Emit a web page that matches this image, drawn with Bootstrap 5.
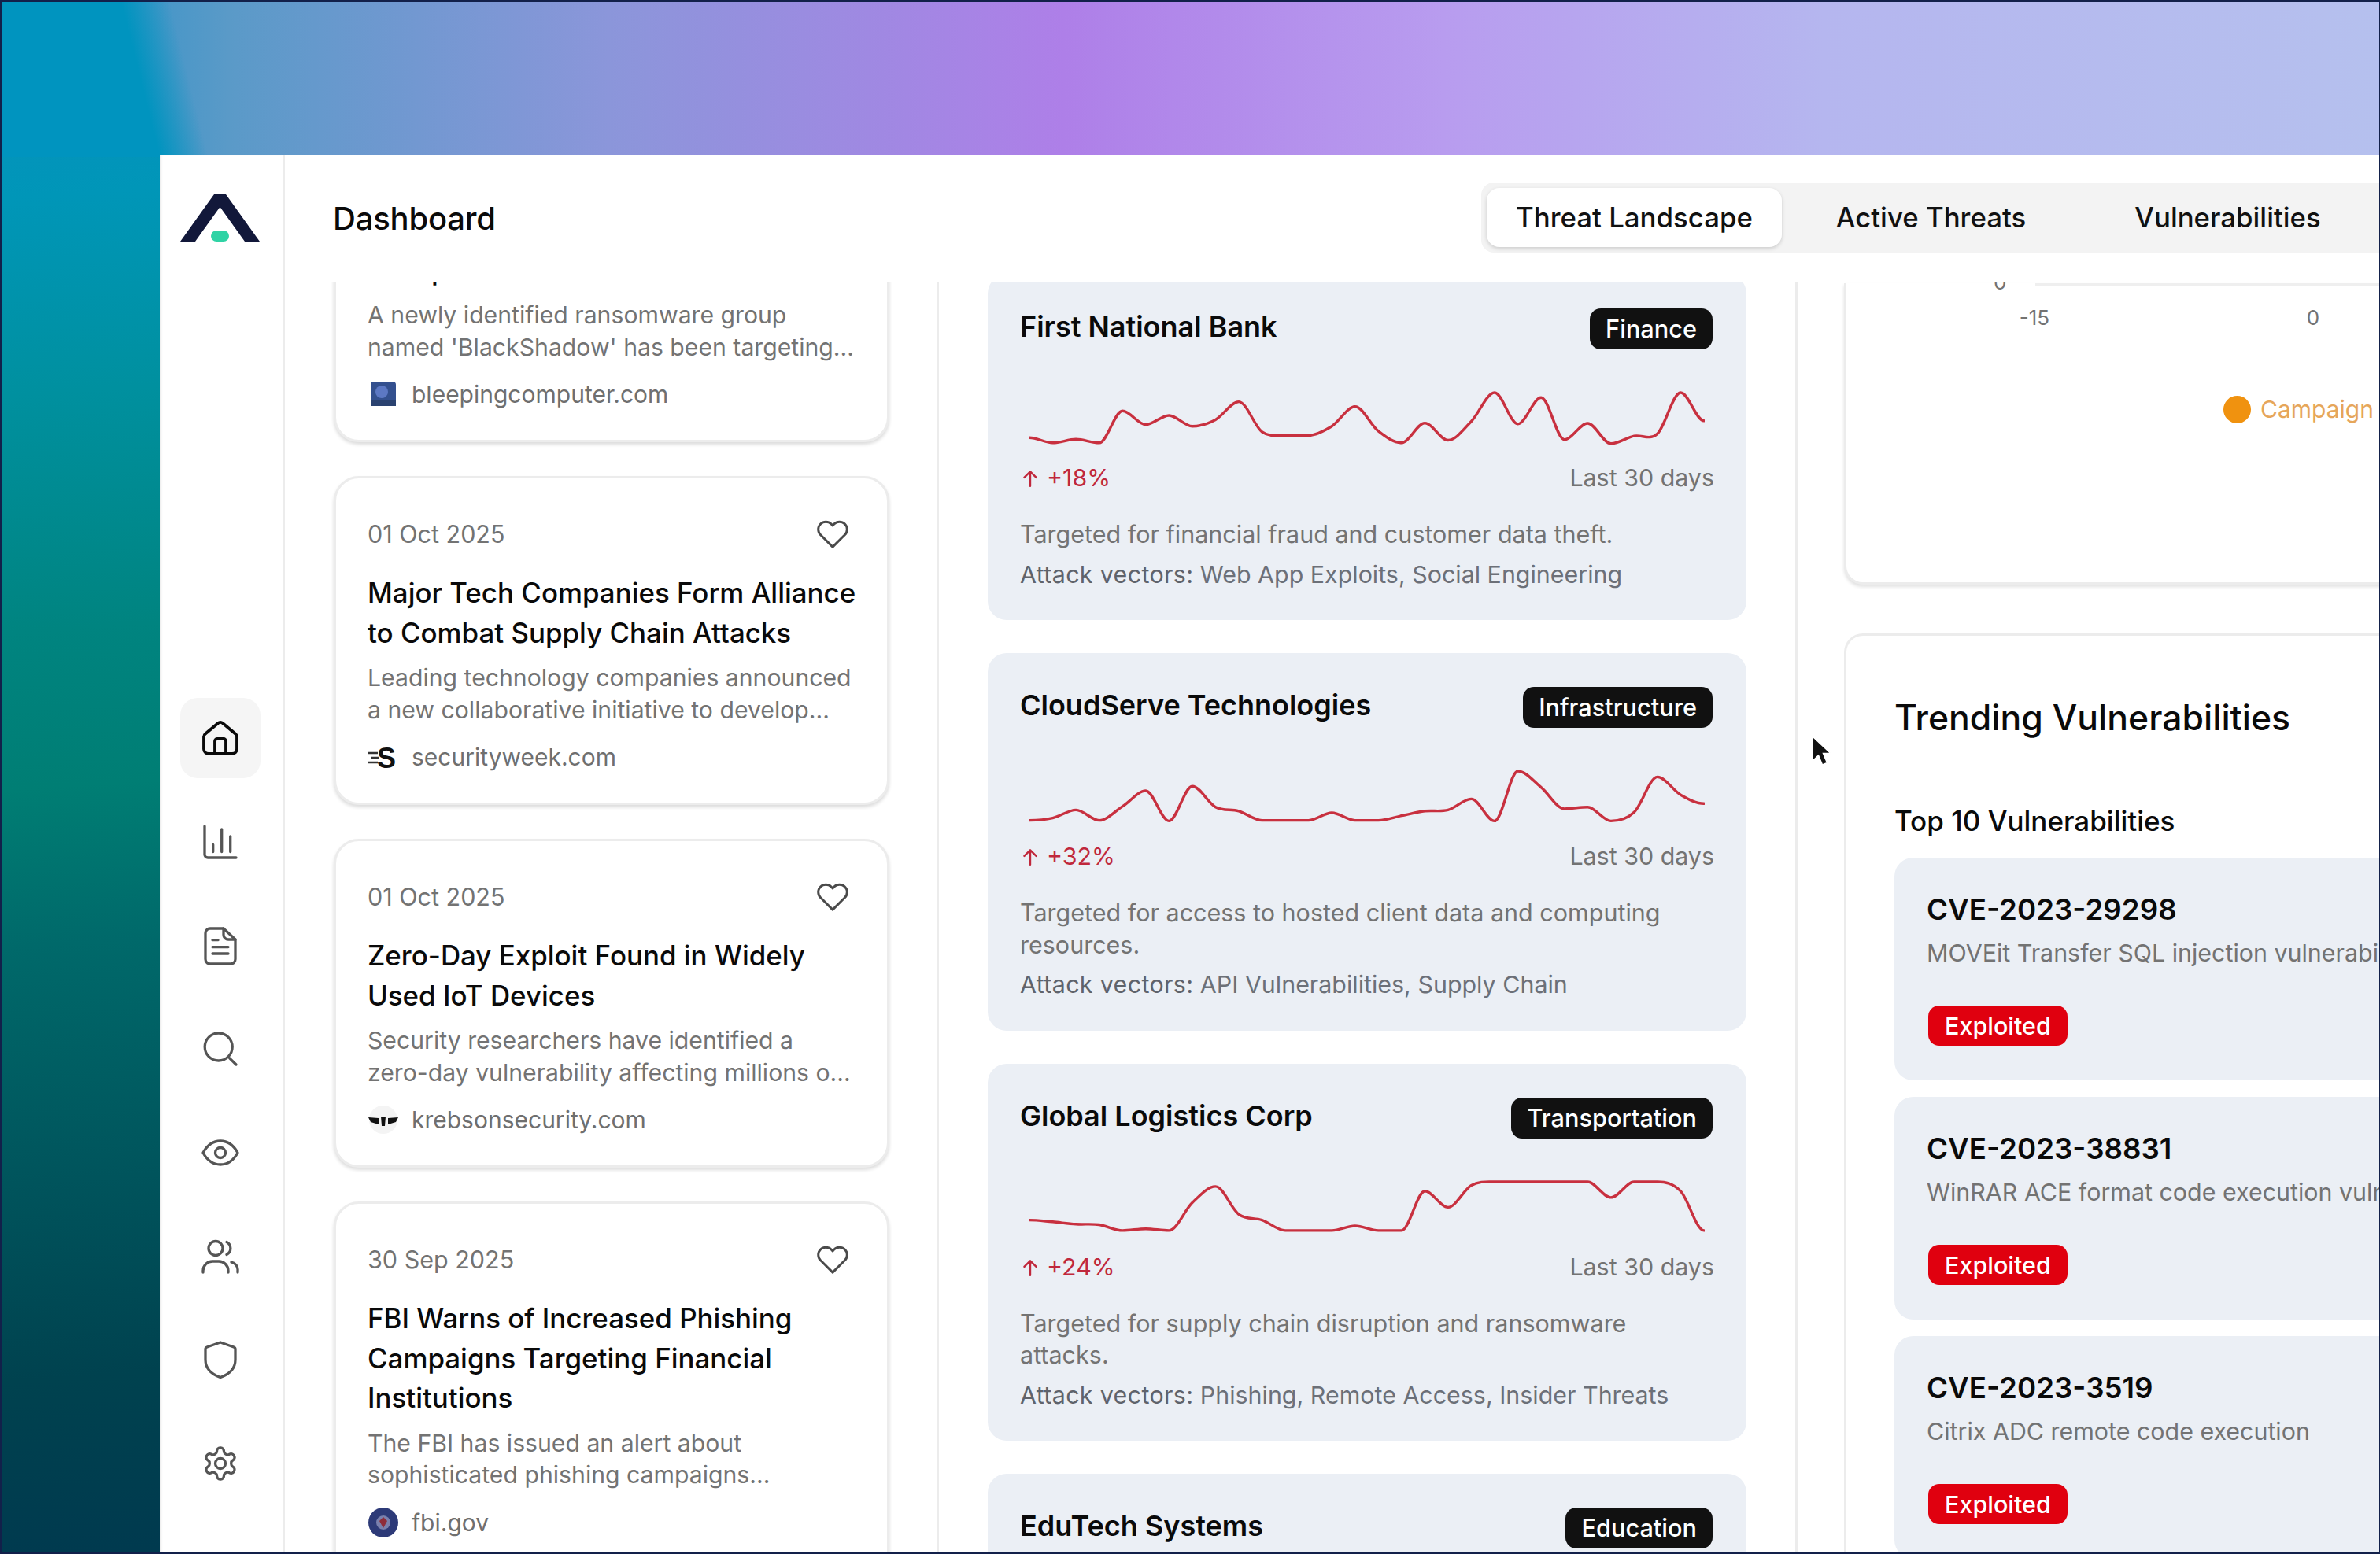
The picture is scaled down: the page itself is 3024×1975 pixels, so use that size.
<!DOCTYPE html>
<html lang="en"><head><meta charset="utf-8"><title>Dashboard</title>
<link href="https://cdn.jsdelivr.net/npm/bootstrap@5.3.0/dist/css/bootstrap.min.css" rel="stylesheet">
<style>
html,body{height:100%;margin:0}
body{font-family:Inter,"Liberation Sans",sans-serif;color:#0a0a0a;overflow:hidden;background:#fff}
.stage{width:3024px;height:1975px;overflow:hidden;position:relative;padding:195px 0 0 201px;border:2px solid #12204a;border-right-width:1px;
background:
linear-gradient(76deg,#0094bf 195px,rgba(0,148,191,0) 255px) 0 0/3024px 197px no-repeat,
linear-gradient(90deg,#3e95c8 160px,#5a9ac8 289px,#8b96da 771px,#ae7fe8 1350px,#b89cef 1832px,#b5b6ef 2314px,#b5c0ee 3024px) 0 0/3024px 197px no-repeat,
linear-gradient(176deg,#0a8fc4 0,#0096b8 250px,#00909f 500px,#008480 800px,#007e74 1000px,#00696a 1200px,#00545c 1500px,#00424f 1750px,#003a4f 1975px)}
.panel{width:3000px;height:1776px;background:#fff}
.side{width:159px;flex:none;border-right:3px solid #ececec;padding:50px 0 62px 26px;box-shadow:inset 3px 0 3px -1px #ededed}
.brand{width:101px;height:60px;display:block}
.snav{gap:29.7px;width:102px}
.sitem{width:102px;height:102px;border-radius:22px;color:#555}
.sitem.on{background:#f5f5f5;color:#0a0a0a}
.sitem svg{width:48px;height:48px;fill:none;stroke:currentColor;stroke-width:3.3;stroke-linecap:round;stroke-linejoin:round}
.sitem.on svg{stroke-width:3.8}
.mainwrap{min-width:0;width:2800px}
.hdr{height:161px;flex:none;padding:0 0 0 61px}
.hdr h1{font-size:40px;font-weight:500;margin:0;letter-spacing:-.2px;width:204px;white-space:nowrap}
.tabsbar{margin-left:1255px;background:#f3f3f3;height:89px;border-radius:16px 0 0 16px;padding:7px;gap:2px;margin-top:-2px;width:1200px}
.tabx{font-size:34.800px;font-weight:500;height:75px;width:375px;flex:none;padding:0;color:#111;border:0;background:none;white-space:nowrap}
.tabx.on{background:#fff;border-radius:16px;box-shadow:0 2px 5px rgba(0,0,0,.16)}
.cols{flex:1 1 0;min-height:0;overflow:hidden}
.colA{width:831px;flex:none;padding:0 60px 0 62px;border-right:3px solid #ececec;overflow:hidden}
.colB{width:1091px;flex:none;padding:0 62px;border-right:3px solid #ececec;overflow:hidden}
.colC{flex:none;width:860px;padding-left:59px;overflow:hidden}
.stackA{margin-top:-214px;gap:43px}
.stackB{margin-top:-9px;gap:42px}
.ncard{height:418px;background:#fff;border:3px solid #ececec;border-radius:32px;box-shadow:0 3px 4px rgba(0,0,0,.14);padding:50px 26px 0 40px;flex:none}
.ncard.big{height:505px}
.ndate{font-size:30.500px;color:#737373;line-height:40px}
.heart{width:42px;height:42px;fill:none;stroke:#4a4a4a;stroke-width:1.7;stroke-linejoin:round;margin-right:22px}
.ntitle{font-size:34.900px;font-weight:500;line-height:50.500px;margin:28px 0 12px;color:#0a0a0a}
.ndesc{font-size:30.200px;line-height:40.500px;color:#737373;margin:0}
.nsrc{font-size:30px;color:#6f6f6f;margin-top:20px;line-height:40px;gap:16px}
.fav{width:40px;height:40px;flex:none;display:block}
.tcard{background:#ebeff5;border-radius:24px;padding:0 41px;flex:none}
.tcard.cut{height:420px}
.tname{font-size:36px;font-weight:600;color:#0a0a0a;margin:0}
.thead{padding-top:45px;height:146px}
.tag{font-size:30.700px;background:#111;color:#fff;border-radius:14px;height:52px;padding:0 20px;font-weight:500;line-height:52px;margin-right:2px;margin-top:-2px}
.spark{display:block;width:858px;height:75px;margin:0 0 0 12px}
.spark path{fill:none;stroke:#c8303f;stroke-width:3.4;stroke-linejoin:round;stroke-linecap:round}
.tmeta{font-size:30.400px;line-height:40px;color:#737373;margin-top:17px}
.delta{color:#c0283c}
.delta svg{width:26px;height:26px;fill:none;stroke:#c0283c;stroke-width:2.2;stroke-linecap:round;stroke-linejoin:round;margin-right:8px;vertical-align:-3px}
.tdesc{font-size:30.500px;line-height:40.500px;color:#737373;margin:32px 0 0}
.tvec{font-size:30.400px;line-height:40.500px;color:#6c7078;margin:10px 0 0;padding-bottom:38px}
.tlab{letter-spacing:.35px;color:#5f636b}
.vcard-top{height:383px;border:3px solid #ececec;border-top:0;border-radius:0 0 24px 24px;box-shadow:0 3px 4px rgba(0,0,0,.12);width:860px;background:#fff;flex:none}
.ax{height:3px;background:#efefef;margin:2px 0 0 240px}
.ptck{margin-left:187px;margin-top:-21px;font-size:26px;color:#737373;line-height:34px;height:34px}
.axrow{padding-left:62px;margin-top:11px;font-size:26px;color:#737373;line-height:34px}
.axrow span{width:354px;display:block;text-align:center;flex:none}
.lgd{margin:81px 0 0 479px;font-size:30px;color:#e6a65a;gap:12px;line-height:36px}
.ldot{width:35px;height:35px;border-radius:50%;background:#f0920f;display:block;flex:none}
.trend{width:860px;margin-top:62px;background:#fff;border:3px solid #ececec;border-right:0;border-bottom:0;border-radius:24px 0 0 0;padding:72px 0 0 61px}
.trend h2{font-size:44.500px;font-weight:500;margin:0;line-height:64px;white-space:nowrap}
.trend h3{font-size:35px;font-weight:500;margin:77px 0 25px;line-height:44px;white-space:nowrap}
.vitem{background:#ebeff5;border-radius:24px 0 0 24px;height:283px;padding:43px 0 0 41px;margin-bottom:21px;white-space:nowrap;overflow:hidden}
.vname{font-size:36.700px;font-weight:600;line-height:46px;margin:0}
.vdesc{font-size:30.400px;color:#737373;line-height:40px;margin:12px 0 0}
.vbad{display:inline-block;font-size:30.500px;font-weight:500;color:#fff;background:#e0000f;border-radius:14px;height:51px;line-height:51px;padding:0 21px;margin:47px 0 0 2px}
.cursor{position:absolute;left:2299px;top:933px;width:28px;height:42px}
</style></head><body>
<div class="stage">
<div class="panel d-flex">
<aside class="side d-flex flex-column justify-content-between">
<svg class="brand" viewBox="0 0 101 60"><path d="M43 0h15l43 60H82L50.500 16 19 60H0z" fill="#12183a"/><rect x="39" y="46" width="23" height="14" rx="7" fill="#2fd3a5"/></svg>
<nav class="snav d-flex flex-column">
<a class="sitem on d-flex align-items-center justify-content-center"><svg viewBox="0 0 48 48"><path d="M5 18.500 20.800 5.200a5 5 0 0 1 6.400 0L43 18.500a5 5 0 0 1 2 4V38a6 6 0 0 1-6 6H9a6 6 0 0 1-6-6V22.500a5 5 0 0 1 2-4z"/><path d="M17 44V28a3 3 0 0 1 3-3h8a3 3 0 0 1 3 3v16"/></svg></a>
<a class="sitem d-flex align-items-center justify-content-center"><svg viewBox="0 0 48 48"><path d="M4 4v36a4 4 0 0 0 4 4h36"/><path d="M14.700 36.500v-9M25.700 36.500V8M36.700 36.500V17"/></svg></a>
<a class="sitem d-flex align-items-center justify-content-center"><svg viewBox="0 0 48 48"><path d="M11 2h17l15 14v25a6 6 0 0 1-6 6H11a6 6 0 0 1-6-6V8a6 6 0 0 1 6-6z"/><path d="M28 2v8a6 6 0 0 0 6 6h9M14 16.700h7M14 25.600h20M14 34h20"/></svg></a>
<a class="sitem d-flex align-items-center justify-content-center"><svg viewBox="0 0 48 48"><circle cx="21.700" cy="21.500" r="17.500"/><path d="M35.700 35.800 44 44"/></svg></a>
<a class="sitem d-flex align-items-center justify-content-center"><svg viewBox="0 0 48 48"><path d="M2 24C8 13 15 9 24 9s16 4 22 15c-6 11-13 15-22 15S8 35 2 24z"/><circle cx="24" cy="24" r="6.500"/></svg></a>
<a class="sitem d-flex align-items-center justify-content-center"><svg viewBox="0 0 48 48"><circle cx="18" cy="13.500" r="9"/><path d="M32 5.500a9 9 0 0 1 0 16M2 44v-2a12 12 0 0 1 12-12h8a12 12 0 0 1 12 12v2M38 31a10 10 0 0 1 8 11v2"/></svg></a>
<a class="sitem d-flex align-items-center justify-content-center"><svg viewBox="0 0 48 48"><path d="M24 2 41 8a3 3 0 0 1 2 3V24c0 12-9 19-19 22.500C14 43 5 36 5 24V11a3 3 0 0 1 2-3z"/></svg></a>
<a class="sitem d-flex align-items-center justify-content-center"><svg viewBox="0 0 48 48"><path transform="scale(2)" stroke-width="1.650" d="M12.220 2h-.44a2 2 0 0 0-2 2v.18a2 2 0 0 1-1 1.730l-.43.25a2 2 0 0 1-2 0l-.15-.08a2 2 0 0 0-2.730.73l-.22.38a2 2 0 0 0 .73 2.730l.15.1a2 2 0 0 1 1 1.720v.51a2 2 0 0 1-1 1.740l-.15.09a2 2 0 0 0-.73 2.730l.22.38a2 2 0 0 0 2.730.73l.15-.08a2 2 0 0 1 2 0l.43.25a2 2 0 0 1 1 1.730V20a2 2 0 0 0 2 2h.44a2 2 0 0 0 2-2v-.18a2 2 0 0 1 1-1.730l.43-.25a2 2 0 0 1 2 0l.15.08a2 2 0 0 0 2.730-.73l.22-.39a2 2 0 0 0-.73-2.730l-.15-.08a2 2 0 0 1-1-1.740v-.5a2 2 0 0 1 1-1.740l.15-.09a2 2 0 0 0 .73-2.730l-.22-.38a2 2 0 0 0-2.730-.73l-.15.08a2 2 0 0 1-2 0l-.43-.25a2 2 0 0 1-1-1.730V4a2 2 0 0 0-2-2z"/><circle cx="24" cy="24" r="6.500"/></svg></a>
</nav>
</aside>
<div class="mainwrap d-flex flex-column">
<header class="hdr d-flex align-items-center">
<h1>Dashboard</h1>
<div class="tabsbar d-flex align-items-center">
<button class="tabx on">Threat Landscape</button>
<button class="tabx">Active Threats</button>
<button class="tabx">Vulnerabilities</button>
</div>
</header>
<div class="cols d-flex">
<section class="colA"><div class="stackA d-flex flex-column">
<article class="ncard"><div class="d-flex justify-content-between align-items-center ndate"><span>02 Oct 2025</span><svg class="heart" viewBox="0 0 24 24"><path d="M20.840 4.610a5.500 5.500 0 0 0-7.780 0L12 5.670l-1.060-1.060a5.500 5.500 0 0 0-7.780 7.780l1.060 1.060L12 21.230l7.780-7.780 1.060-1.060a5.500 5.500 0 0 0 0-7.780z"/></svg></div>
<div class="ntitle">New Ransomware Threat Actor<br>Group Hits Healthcare</div>
<p class="ndesc">A newly identified ransomware group<br>named 'BlackShadow' has been targeting...</p>
<div class="nsrc d-flex align-items-center"><svg class="fav" viewBox="0 0 40 40"><rect x="4" y="4" width="32" height="31" rx="4" fill="#33508f"/><circle cx="18" cy="17" r="8" fill="#5c78c4"/><rect x="4" y="28" width="32" height="7" fill="#2a4270"/></svg><span>bleepingcomputer.com</span></div></article>
<article class="ncard"><div class="d-flex justify-content-between align-items-center ndate"><span>01 Oct 2025</span><svg class="heart" viewBox="0 0 24 24"><path d="M20.840 4.610a5.500 5.500 0 0 0-7.780 0L12 5.670l-1.060-1.060a5.500 5.500 0 0 0-7.780 7.780l1.060 1.060L12 21.230l7.780-7.780 1.060-1.060a5.500 5.500 0 0 0 0-7.780z"/></svg></div>
<div class="ntitle">Major Tech Companies Form Alliance to Combat Supply Chain Attacks</div>
<p class="ndesc">Leading technology companies announced a new collaborative initiative to develop...</p>
<div class="nsrc d-flex align-items-center"><svg class="fav" viewBox="0 0 40 40"><path d="M1 15h12M4 21h10M1 27h12" stroke="#333" stroke-width="2.500"/><text x="12" y="34" font-family="Liberation Sans" font-weight="700" font-size="36" fill="#111">S</text></svg><span>securityweek.com</span></div></article>
<article class="ncard"><div class="d-flex justify-content-between align-items-center ndate"><span>01 Oct 2025</span><svg class="heart" viewBox="0 0 24 24"><path d="M20.840 4.610a5.500 5.500 0 0 0-7.780 0L12 5.670l-1.060-1.060a5.500 5.500 0 0 0-7.780 7.780l1.060 1.060L12 21.230l7.780-7.780 1.060-1.060a5.500 5.500 0 0 0 0-7.780z"/></svg></div>
<div class="ntitle">Zero-Day Exploit Found in Widely Used IoT Devices</div>
<p class="ndesc">Security researchers have identified a<br>zero-day vulnerability affecting millions o...</p>
<div class="nsrc d-flex align-items-center"><svg class="fav" viewBox="0 0 40 40"><circle cx="20" cy="20" r="18" fill="#f4f4f4"/><path d="M1 17l13 1v8L4 23zM39 17l-13 1v8l10-3zM17 16h6l-1 12h-4z" fill="#111"/></svg><span>krebsonsecurity.com</span></div></article>
<article class="ncard big"><div class="d-flex justify-content-between align-items-center ndate"><span>30 Sep 2025</span><svg class="heart" viewBox="0 0 24 24"><path d="M20.840 4.610a5.500 5.500 0 0 0-7.780 0L12 5.670l-1.060-1.060a5.500 5.500 0 0 0-7.780 7.780l1.060 1.060L12 21.230l7.780-7.780 1.060-1.060a5.500 5.500 0 0 0 0-7.780z"/></svg></div>
<div class="ntitle">FBI Warns of Increased Phishing Campaigns Targeting Financial Institutions</div>
<p class="ndesc">The FBI has issued an alert about sophisticated phishing campaigns...</p>
<div class="nsrc d-flex align-items-center"><svg class="fav" viewBox="0 0 40 40"><circle cx="20" cy="20" r="19" fill="#2d3a78"/><circle cx="20" cy="20" r="9" fill="#7a80ad"/><path d="M20 13l5 5-5 9-5-9z" fill="#8e2c3a"/></svg><span>fbi.gov</span></div></article>
</div></section>
<section class="colB"><div class="stackB d-flex flex-column">
<article class="tcard"><div class="thead d-flex justify-content-between"><h2 class="tname">First National Bank</h2><span class="tag">Finance</span></div>
<svg class="spark" viewBox="0 0 858 75" data-top="722" data-scale="2.412" data-y="860,876,865,876,778,820,792,825,805,750,842,853,853,825,765,840,876,815,868,810,722,818,737,866,816,878,855,848,722,808"><path/></svg>
<div class="tmeta d-flex justify-content-between"><span class="delta"><svg viewBox="0 0 24 24"><path d="M12 21V4M5 11l7-7 7 7"/></svg>+18%</span><span>Last 30 days</span></div>
<p class="tdesc">Targeted for financial fraud and customer data theft.</p><p class="tvec"><span class="tlab">Attack vectors:</span> Web App Exploits, Social Engineering</p></article>
<article class="tcard"><div class="thead d-flex justify-content-between"><h2 class="tname">CloudServe Technologies</h2><span class="tag">Infrastructure</span></div>
<svg class="spark" viewBox="0 0 858 75" data-top="219" data-scale="1.3575" data-y="304,300,286,304,280,253,305,245,281,288,304,304,304,291,304,304,296,288,286,267,305,219,247,284,281,305,290,229,260,275"><path/></svg>
<div class="tmeta d-flex justify-content-between"><span class="delta"><svg viewBox="0 0 24 24"><path d="M12 21V4M5 11l7-7 7 7"/></svg>+32%</span><span>Last 30 days</span></div>
<p class="tdesc">Targeted for access to hosted client data and computing resources.</p><p class="tvec"><span class="tlab">Attack vectors:</span> API Vulnerabilities, Supply Chain</p></article>
<article class="tcard"><div class="thead d-flex justify-content-between"><h2 class="tname">Global Logistics Corp</h2><span class="tag">Transportation</span></div>
<svg class="spark" viewBox="0 0 858 75" data-top="929" data-scale="1.3575" data-y="995,998,1002,1003,1013,1010,1013,965,937,985,995,1013,1013,1013,1005,1013,1013,945,973,935,929,929,929,929,929,956,929,929,945,1013"><path/></svg>
<div class="tmeta d-flex justify-content-between"><span class="delta"><svg viewBox="0 0 24 24"><path d="M12 21V4M5 11l7-7 7 7"/></svg>+24%</span><span>Last 30 days</span></div>
<p class="tdesc">Targeted for supply chain disruption and ransomware attacks.</p><p class="tvec"><span class="tlab">Attack vectors:</span> Phishing, Remote Access, Insider Threats</p></article>
<article class="tcard cut"><div class="thead d-flex justify-content-between"><h2 class="tname">EduTech Systems</h2><span class="tag">Education</span></div></article>
</div></section>
<section class="colC">
<div class="vcard-top">
<div class="ax"></div>
<div class="ptck">0</div>
<div class="axrow d-flex"><span>-15</span><span>0</span></div>
<div class="lgd d-flex align-items-center"><i class="ldot"></i><span>Campaign</span></div>
</div>
<div class="trend">
<h2>Trending Vulnerabilities</h2>
<h3>Top 10 Vulnerabilities</h3>
<div class="vitem"><p class="vname">CVE-2023-29298</p><p class="vdesc">MOVEit Transfer SQL injection vulnerability</p><span class="vbad">Exploited</span></div>
<div class="vitem"><p class="vname">CVE-2023-38831</p><p class="vdesc">WinRAR ACE format code execution vulnerability</p><span class="vbad">Exploited</span></div>
<div class="vitem"><p class="vname">CVE-2023-3519</p><p class="vdesc">Citrix ADC remote code execution</p><span class="vbad">Exploited</span></div>
</div>
</section>
</div>
</div>
</div>
<svg class="cursor" viewBox="0 0 28 42"><path d="M2 1v31l7.500-7 5 12 6-2.500-5-12H25z" fill="#111" stroke="#fff" stroke-width="1.500"/></svg>
</div>
<script src="https://cdn.jsdelivr.net/npm/bootstrap@5.3.0/dist/js/bootstrap.bundle.min.js"></script>
<script>
document.querySelectorAll('.spark').forEach(function(s){
 var top=+s.dataset.top,sc=+s.dataset.scale,dx=857/29;
 var pts=s.dataset.y.split(',').map(function(v,i){return [i*dx,(+v-top)/sc+4];});
 var d='M'+pts[0][0].toFixed(1)+' '+pts[0][1].toFixed(1);
 for(var i=0;i<pts.length-1;i++){
  var a=pts[i],b=pts[i+1],p=pts[i-1]||a,n=pts[i+2]||b;
  var m1=(b[1]-p[1])/2,m2=(n[1]-a[1])/2;
  if((a[1]-p[1])*(b[1]-a[1])<=0)m1=0;
  if((b[1]-a[1])*(n[1]-b[1])<=0)m2=0;
  d+=' C'+(a[0]+dx/3).toFixed(1)+' '+(a[1]+m1/3).toFixed(1)+' '+(b[0]-dx/3).toFixed(1)+' '+(b[1]-m2/3).toFixed(1)+' '+b[0].toFixed(1)+' '+b[1].toFixed(1);
 }
 s.querySelector('path').setAttribute('d',d);
});
</script>
</body></html>
